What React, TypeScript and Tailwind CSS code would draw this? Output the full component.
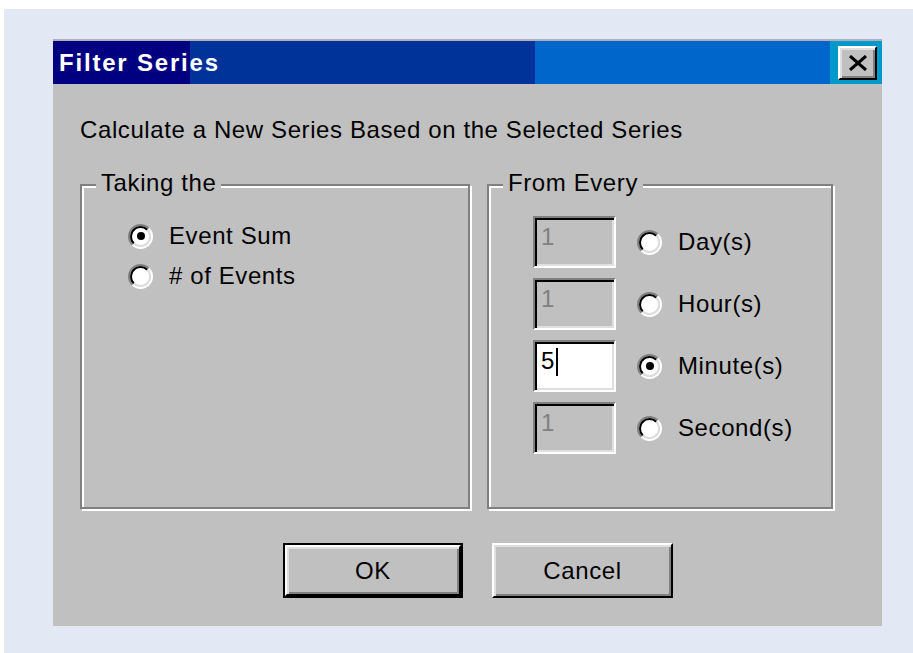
import React from 'react';

const ui = "font-['Liberation_Sans',Arial,sans-serif] text-[24px] leading-[28px] tracking-[0.6px]";

// classic raised bevel used by push buttons and the close box
const raised =
  'border-2 border-t-white border-l-white border-r-black border-b-black shadow-[inset_2px_2px_0_#dfdfdf,inset_-2px_-2px_0_#808080]';

function Radio({ checked = false }: { checked?: boolean }) {
  return (
    <span className="flex h-[25px] w-[25px] shrink-0 rounded-full border-2 border-t-[#808080] border-l-[#808080] border-r-white border-b-white">
      <span className="flex flex-1 items-center justify-center rounded-full border-2 border-t-black border-l-black border-r-[#dfdfdf] border-b-[#dfdfdf] bg-white">
        {checked && <span className="h-[8px] w-[8px] rounded-full bg-black" />}
      </span>
    </span>
  );
}

function Field({ value, enabled = false, caret = false }: { value: string; enabled?: boolean; caret?: boolean }) {
  return (
    <div
      className={`flex h-[52px] w-[83px] shrink-0 items-start border-2 border-t-[#808080] border-l-[#808080] border-r-white border-b-white pl-[4px] pt-[5px] shadow-[inset_2px_2px_0_#000,inset_-2px_-2px_0_#dfdfdf] ${
        enabled ? 'bg-white text-black' : 'bg-[#c0c0c0] text-[#808080]'
      }`}
    >
      <span className="pl-[2px]">{value}</span>
      {caret && <span className="ml-[1px] mt-[1px] h-[28px] w-[2px] bg-black" />}
    </div>
  );
}

function Group({ title, className, children }: { title: string; className: string; children: React.ReactNode }) {
  return (
    <fieldset
      className={`flex flex-col border-2 border-[#808080] shadow-[inset_2px_2px_0_#fff,2px_2px_0_#fff] ${className}`}
    >
      <legend className="ml-[14px] bg-[#c0c0c0] px-[5px] pb-[3px]">{title}</legend>
      {children}
    </fieldset>
  );
}

const units = [
  { label: 'Day(s)', value: '1' },
  { label: 'Hour(s)', value: '1' },
  { label: 'Minute(s)', value: '5', active: true },
  { label: 'Second(s)', value: '1' },
];

export default function App() {
  return (
    <div className="h-[653px] w-[913px] bg-white pl-[4px] pt-[9px]">
      <div className="h-full w-full bg-[#e2e8f4] pl-[49px] pt-[30px]">
        <div className={`flex h-[587px] w-[829px] flex-col border-t-2 border-[#b0b0bc] bg-[#c0c0c0] text-black ${ui}`}>
          {/* title bar */}
          <div className="flex h-[43px] shrink-0 items-center justify-between bg-[linear-gradient(to_right,#000080_0_137px,#003399_137px_482px,#0066cc_482px_777px,#0099cc_777px)] pl-[6px] pr-[5px]">
            <span className="pt-[1px] font-bold tracking-[1.8px] text-white">Filter Series</span>
            <button className={`flex h-[34px] w-[39px] items-center justify-center bg-[#c0c0c0] ${raised}`}>
              <svg width="20" height="16" viewBox="0 0 20 16">
                <path d="M2 1 L18 15 M18 1 L2 15" stroke="#000" strokeWidth="3" />
              </svg>
            </button>
          </div>

          <div className="flex flex-1 flex-col pl-[27px] pt-[32px]">
            <p>Calculate a New Series Based on the Selected Series</p>

            <div className="mt-[25px] flex h-[340px] gap-[17px]">
              <Group title="Taking the" className="w-[390px]">
                <div className="flex flex-col pl-[46px] pt-[16px]">
                  <label className="flex h-[40px] items-center gap-[16px]">
                    <Radio checked />
                    <span>Event Sum</span>
                  </label>
                  <label className="flex h-[40px] items-center gap-[16px]">
                    <Radio />
                    <span># of Events</span>
                  </label>
                </div>
              </Group>

              <Group title="From Every" className="w-[346px]">
                <div className="flex flex-col gap-[10px] pl-[44px] pt-[16px]">
                  {units.map((u) => (
                    <div key={u.label} className="flex items-center">
                      <Field value={u.value} enabled={u.active} caret={u.active} />
                      <span className="ml-[21px]">
                        <Radio checked={u.active} />
                      </span>
                      <span className="ml-[16px]">{u.label}</span>
                    </div>
                  ))}
                </div>
              </Group>
            </div>

            <div className="mt-[34px] flex gap-[29px] pl-[203px]">
              <button className="flex h-[55px] w-[180px] border-2 border-black">
                <span className={`flex flex-1 items-center justify-center bg-[#c0c0c0] ${raised}`}>OK</span>
              </button>
              <button className={`flex h-[55px] w-[181px] items-center justify-center bg-[#c0c0c0] ${raised}`}>
                Cancel
              </button>
            </div>
          </div>
        </div>
      </div>
    </div>
  );
}
